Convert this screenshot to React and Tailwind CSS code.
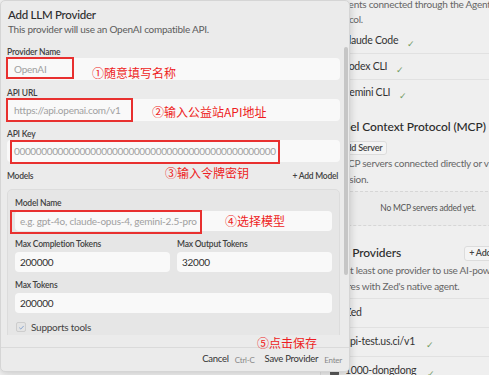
import React from "react";

function Check() {
  return <span className="text-[9px] leading-none text-[#6f9a62]">✓</span>;
}

function AgentRow({ name, border }) {
  return (
    <div className={"flex items-center gap-[4px] " + (border ? "h-[26px] border-b border-[#e1e1e1]" : "h-[25px]")}>
      <span className="w-[12px] h-[12px] rounded-[3px] bg-[#cfcfcf]" />
      <span className="text-[10.5px] text-[#333]">{name}</span>
      <span className="ml-[5px]"><Check /></span>
    </div>
  );
}

function ProviderRow({ name, check, border }) {
  return (
    <div className={"flex items-center gap-[6px] pl-[4px] " + (border ? "h-[29px] border-b border-[#e1e1e1]" : "h-[28px]")}>
      <span className="w-[9px] h-[9px] rounded-[2px] bg-[#5a5a5a]" />
      <span className="text-[10.5px] text-[#333]">{name}</span>
      {check && <span className="ml-[5px]"><Check /></span>}
    </div>
  );
}

function SettingsPanel() {
  return (
    <div className="w-[215px] shrink-0 bg-[#efefef] border-l border-[#e0e0e0] px-[5px] flex flex-col">
      <div className="-mt-[3px] h-[30px] text-[10px] leading-[15px] text-[#666]">
        All agents connected through the Agent Client Protocol.
      </div>
      <div className="mt-[1px] flex flex-col">
        <AgentRow name="Claude Code" border />
        <AgentRow name="Codex CLI" border />
        <AgentRow name="Gemini CLI" />
      </div>
      <div className="mt-[4px] h-[2px] -mx-[5px] bg-[#dfdfdf]" />
      <div className="pt-[9px] flex flex-col">
        <div className="h-[18px] text-[12px] leading-[18px] text-[#2a2a2a] font-medium tracking-[-0.1px] whitespace-nowrap">Model Context Protocol (MCP)</div>
        <div className="mt-[5px] self-start h-[14px] pl-[7px] pr-[4px] border border-[#dcdcdc] bg-[#f4f4f4] rounded-[3px] flex items-center text-[9px] font-semibold text-[#444]">
          + Add Server
        </div>
        <div className="text-[10px] leading-[16px] text-[#666]">
          All MCP servers connected directly or via a Zed extension.
        </div>
        <div className="mt-[4px] h-[35px] border border-dashed border-[#d6d6d6] bg-[#ebebeb] rounded-[4px] flex items-center justify-center text-[8.5px] text-[#555]">
          No MCP servers added yet.
        </div>
      </div>
      <div className="mt-[9px] h-[2px] -mx-[5px] bg-[#dfdfdf]" />
      <div className="pt-[9px] flex flex-col">
        <div className="flex items-center justify-between h-[18px]">
          <span className="text-[12px] text-[#2a2a2a] font-medium tracking-[-0.1px]">LLM Providers</span>
          <span className="h-[15px] px-[4px] border border-[#dcdcdc] bg-[#f4f4f4] rounded-[3px] flex items-center text-[9px] font-semibold text-[#444]">
            + Add Provider
          </span>
        </div>
        <div className="text-[10px] leading-[16px] text-[#666]">
          Add at least one provider to use AI-powered features with Zed's native agent.
        </div>
        <div className="mt-[4px] border-t border-[#e1e1e1] flex flex-col">
          <ProviderRow name="Zed" border />
          <ProviderRow name="api-test.us.ci/v1" check border />
          <ProviderRow name="1000-dongdong" check />
        </div>
      </div>
    </div>
  );
}

function Label({ children }) {
  return (
    <div className="h-[12px] pt-[1px] leading-[12px] text-[8.5px] font-semibold text-[#3f3f3f] tracking-[-0.2px] whitespace-nowrap">{children}</div>
  );
}

function Input({ text, placeholder, card, extra = "" }) {
  return (
    <div
      className={
        "rounded-[4px] bg-[#f9f9f9] flex items-center text-[10px] overflow-hidden whitespace-nowrap " +
        (card ? "h-[20px] mt-[3px] px-[5px] " : "h-[22px] mt-[1px] px-[7px] ") +
        extra
      }
    >
      <span className={placeholder ? "text-[#a0a0a0]" : "text-[#2f2f2f]"}>{text}</span>
    </div>
  );
}

const anno = "absolute text-[12px] leading-[16px] tracking-normal text-[#ee1d23] font-['Noto_Sans_CJK_SC',sans-serif] whitespace-nowrap";

function Modal() {
  const zeros = "000000000000000000000000000000000000000000000000";
  return (
    <div className="absolute left-0 top-0 w-[350px] h-[372px] bg-[#ebebeb] border border-[#d5d5d5] rounded-[5px] shadow-[0_2px_8px_rgba(0,0,0,0.18)] flex flex-col overflow-hidden">
      <div className="h-[39px] px-[7px] pt-[6px] flex flex-col">
        <div className="text-[11.5px] leading-[15px] text-[#2d2d2d] font-medium">Add LLM Provider</div>
        <div className="text-[10px] leading-[15px] text-[#5c5c5c]">This provider will use an OpenAI compatible API.</div>
      </div>
      <div className="relative h-[295px] overflow-hidden">
        <div className="pl-[6px] pr-[9px] pt-[5px] flex flex-col">
          <div className="flex flex-col">
            <Label>Provider Name</Label>
            <Input text="OpenAI" placeholder />
          </div>
          <div className="mt-[6px] flex flex-col">
            <Label>API URL</Label>
            <Input text="https://api.openai.com/v1" placeholder />
          </div>
          <div className="mt-[6px] flex flex-col">
            <Label>API Key</Label>
            <Input text={zeros} placeholder extra="tracking-[-0.35px]" />
          </div>
          <div className="mt-[8px] h-[12px] pt-[1px] flex items-center justify-between">
            <span className="text-[8.5px] font-semibold text-[#3f3f3f]">Models</span>
            <span className="pr-[2px] text-[8.5px] font-semibold text-[#3f3f3f]">+ Add Model</span>
          </div>
          <div className="mt-[7px] border border-[#dcdcdc] rounded-[5px] bg-[#e6e6e6] px-[7px] pt-[6px] pb-[20px] flex flex-col">
            <div className="flex flex-col">
              <Label>Model Name</Label>
              <Input text="e.g. gpt-4o, claude-opus-4, gemini-2.5-pro" placeholder card extra="tracking-[-0.2px]" />
            </div>
            <div className="mt-[6px] grid grid-cols-2 gap-x-[7px]">
              <div className="flex flex-col">
                <Label>Max Completion Tokens</Label>
                <Input text="200000" card />
              </div>
              <div className="flex flex-col">
                <Label>Max Output Tokens</Label>
                <Input text="32000" card />
              </div>
            </div>
            <div className="mt-[6px] flex flex-col">
              <Label>Max Tokens</Label>
              <Input text="200000" card />
            </div>
            <div className="mt-[7px] h-[14px] flex items-center gap-[5px] pl-[1px]">
              <span className="w-[10px] h-[10px] rounded-[2px] border border-[#cdcdcd] bg-[#e4e4e4] flex items-center justify-center">
                <svg width="7" height="7" viewBox="0 0 8 8" fill="none">
                  <path d="M1.5 4.2 L3.2 5.8 L6.5 2.2" stroke="#7d9ccb" strokeWidth="1" />
                </svg>
              </span>
              <span className="text-[10px] text-[#444]">Supports tools</span>
            </div>
          </div>
        </div>
        <div className="absolute right-[1px] top-[7px] w-[4px] h-[228px] rounded-full bg-[#c6c6c6]" />
      </div>
      <div className="h-[12px]" />
      <div className="h-[24px] border-t border-[#dadada] flex items-center justify-end pr-[7px]">
        <span className="text-[9.5px] text-[#333]">Cancel</span>
        <span className="ml-[6px] text-[8px] text-[#888]">Ctrl-C</span>
        <span className="ml-[10px] text-[9.5px] text-[#333]">Save Provider</span>
        <span className="ml-[6px] text-[8px] text-[#888]">Enter</span>
      </div>

      <div className="absolute left-[5px] top-[56px] w-[68px] h-[22px] border-2 border-[#e8302f]" />
      <div className="absolute left-[5px] top-[97px] w-[127px] h-[24px] border-2 border-[#e8302f]" />
      <div className="absolute left-[9px] top-[139px] w-[270px] h-[24px] border-2 border-[#e8302f]" />
      <div className="absolute left-[9px] top-[209px] w-[192px] h-[24px] border-2 border-[#e8302f]" />

      <div className={anno + " left-[91px] top-[64px]"}>①随意填写名称</div>
      <div className={anno + " left-[151px] top-[103px]"}>②输入公益站API地址</div>
      <div className={anno + " left-[164px] top-[164px]"}>③输入令牌密钥</div>
      <div className={anno + " left-[224px] top-[212px]"}>④选择模型</div>
      <div className={anno + " left-[256px] top-[334px]"}>⑤点击保存</div>
    </div>
  );
}

export default function App() {
  return (
    <div className="relative w-[489px] h-[375px] overflow-hidden bg-[#f4f4f4] font-['Lato',sans-serif] tracking-[-0.25px] flex">
      <div className="w-[320px] shrink-0" />
      <SettingsPanel />
      <Modal />
    </div>
  );
}
